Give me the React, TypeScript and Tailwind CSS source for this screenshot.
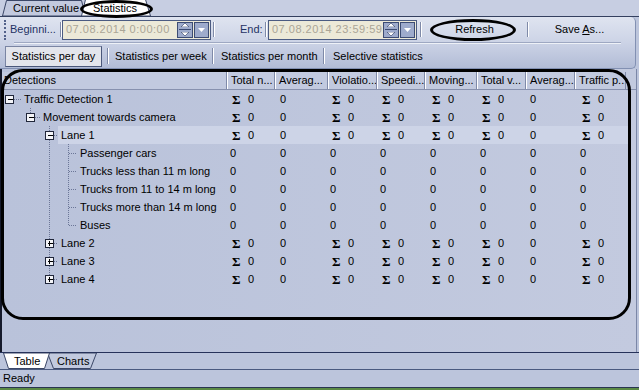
import React from 'react'

type Row = {
  label: string
  level: 0 | 1 | 2 | 3
  box?: 'minus' | 'plus'
  lines: { x: number; full: boolean }[]
  sum: boolean
  hl?: boolean
}

const svgW = [19, 38, 56, 75]
const centers = [7, 28, 47, 66]
const labelW = ['w-[207px]', 'w-[188px]', 'w-[170px]', 'w-[151px]']
const sigmaCols = [true, false, true, true, true, true, false, true]

const leaf = (label: string, last = false): Row => ({
  label,
  level: 3,
  lines: [
    { x: 47, full: true },
    { x: 66, full: !last },
  ],
  sum: false,
})

const rows: Row[] = [
  { label: 'Traffic Detection 1', level: 0, box: 'minus', lines: [], sum: true },
  { label: 'Movement towards camera', level: 1, box: 'minus', lines: [{ x: 28, full: false }], sum: true },
  { label: 'Lane 1', level: 2, box: 'minus', lines: [{ x: 47, full: true }], sum: true, hl: true },
  leaf('Passenger cars'),
  leaf('Trucks less than 11 m long'),
  leaf('Trucks from 11 to 14 m long'),
  leaf('Trucks more than 14 m long'),
  leaf('Buses', true),
  { label: 'Lane 2', level: 2, box: 'plus', lines: [{ x: 47, full: true }], sum: true },
  { label: 'Lane 3', level: 2, box: 'plus', lines: [{ x: 47, full: true }], sum: true },
  { label: 'Lane 4', level: 2, box: 'plus', lines: [{ x: 47, full: false }], sum: true },
]

const headers = [
  { t: 'Total n...', w: 'w-[48px]' },
  { t: 'Averag...', w: 'w-[53px]' },
  { t: 'Violatio...', w: 'w-[49px]' },
  { t: 'Speedi...', w: 'w-[48px]' },
  { t: 'Moving...', w: 'w-[52px]' },
  { t: 'Total v...', w: 'w-[49px]' },
  { t: 'Averag...', w: 'w-[49px]' },
  { t: 'Traffic p...', w: 'w-[51px]' },
]

function TreeGlyph({ row }: { row: Row }) {
  const w = svgW[row.level]
  const c = centers[row.level]
  const dot = { stroke: '#6b7697', strokeDasharray: '1 1' }
  return (
    <svg width={w} height={18} className="shrink-0">
      {row.lines.map((l, i) => (
        <line key={i} x1={l.x + 0.5} x2={l.x + 0.5} y1={0} y2={l.full ? 18 : 9} {...dot} />
      ))}
      {row.box ? (
        <>
          <line x1={c + 5} x2={w} y1={9.5} y2={9.5} {...dot} />
          <rect x={c - 3.5} y={5.5} width={8} height={8} fill="#f3f4f8" stroke="#20263a" />
          <line x1={c - 1} x2={c + 4} y1={9.5} y2={9.5} stroke="#000" />
          {row.box === 'plus' && <line x1={c + 0.5} x2={c + 0.5} y1={7} y2={12} stroke="#000" />}
        </>
      ) : (
        <line x1={c + 1} x2={w} y1={9.5} y2={9.5} {...dot} />
      )}
    </svg>
  )
}

function Cell({ sum }: { sum: boolean }) {
  if (sum) {
    return (
      <div className="w-[50px] flex items-center">
        <span className="w-[20px] pl-[4px] font-bold text-[13px] font-['Liberation_Serif',serif] leading-none">Σ</span>
        <span>0</span>
      </div>
    )
  }
  return <div className="w-[50px] pl-[2px]">0</div>
}

function Sep({ h = 'h-[15px]' }: { h?: string }) {
  return <div className={`w-[2px] ${h} border-l border-[#7f8aa8] border-r border-r-white shrink-0`} />
}

function DateBox({ value }: { value: string }) {
  return (
    <div className="w-[149px] h-[20px] border border-[#4b5b82] bg-[#ece9d8] flex items-center shrink-0">
      <span className="flex-1 pl-[3px] text-[#aaa596] tracking-[0.5px]">{value}</span>
      <div className="w-[16px] h-[16px] border border-[#3d4c73] bg-[#9eabcc] flex flex-col items-center justify-center gap-[2px]">
        <svg width="8" height="4"><polygon points="0,4 4,0 8,4" fill="#fff" stroke="#2c3a60" strokeWidth="0.6" /></svg>
        <div className="w-[12px] h-px bg-[#3d4c73]" />
        <svg width="8" height="4"><polygon points="0,0 8,0 4,4" fill="#fff" stroke="#2c3a60" strokeWidth="0.6" /></svg>
      </div>
      <div className="ml-[1px] mr-[1px] w-[15px] h-[16px] border border-[#3d4c73] bg-[#9eabcc] flex items-center justify-center">
        <svg width="7" height="4"><polygon points="0,0 7,0 3.5,4" fill="#fff" /></svg>
      </div>
    </div>
  )
}

export default function App() {
  return (
    <div className="w-[639px] h-[390px] relative overflow-hidden bg-[#bcc5dc] text-[11px] text-black font-['Liberation_Sans',Arial,sans-serif] flex flex-col leading-none">
      {/* top tabs */}
      <div className="h-[17px] shrink-0 flex items-end bg-[#c7cee2] border-b border-[#34405f]">
        <div className="relative ml-[2px] w-[84px] h-[16px] flex items-center">
          <svg className="absolute inset-0" width="84" height="16">
            <polygon points="0.5,16 4.5,0.5 79.5,0.5 83.5,16" fill="#c2c9de" stroke="#3b4767" />
          </svg>
          <span className="relative pl-[11px]">Current value</span>
        </div>
        <div className="relative -ml-[5px] w-[70px] h-[17px] flex items-center z-10">
          <svg className="absolute inset-0" width="70" height="17">
            <polygon points="0.5,17 4.5,0.5 64.5,0.5 69.5,17" fill="#fff" stroke="#3b4767" />
          </svg>
          <span className="relative pl-[12px] pt-[1px]">Statistics</span>
        </div>
      </div>

      {/* toolbar */}
      <div className="h-[52px] shrink-0 mr-[3px] rounded-r-[5px] bg-gradient-to-b from-[#dfe4f0] via-[#ccd3e6] to-[#b2bcd6] border-b border-r border-[#8290b2] flex flex-col">
        <div className="h-[25px] flex items-center">
          <div className="ml-[4px] w-[2px] h-[20px] border-l-2 border-dotted border-[#52618a]" />
          <span className="ml-[4px] w-[50px] text-[#1f3264]">Beginni...</span>
          <Sep />
          <DateBox value="07.08.2014 0:00:00" />
          <div className="ml-[2px]"><Sep /></div>
          <span className="ml-[25px] w-[25px] text-[#1f3264]">End:</span>
          <Sep />
          <div className="ml-[1px]"><DateBox value="07.08.2014 23:59:59" /></div>
          <div className="ml-[3px]"><Sep /></div>
          <span className="w-[105px] text-center">Refresh</span>
          <Sep />
          <span className="w-[101px] text-center">
            Save <span className="underline">A</span>s...
          </span>
        </div>
        <div className="mx-[14px] h-[2px] border-t border-[#9ea8c2] border-b border-b-[#eef1f7]" />
        <div className="flex-1 flex items-center">
          <div className="ml-[5px] w-[97px] h-[21px] flex items-center justify-center bg-[#e3e5ec] border border-[#4a577a] border-t-[#7a85a3] border-l-[#7a85a3]">
            Statistics per day
          </div>
          <div className="ml-[5px]"><Sep h="h-[16px]" /></div>
          <span className="ml-[6px] w-[97px]">Statistics per week</span>
          <Sep h="h-[16px]" />
          <span className="ml-[7px] w-[102px]">Statistics per month</span>
          <Sep h="h-[16px]" />
          <span className="ml-[8px]">Selective statistics</span>
        </div>
      </div>

      {/* grid */}
      <div className="flex-1 border-l-2 border-[#15192a] mr-[2px] border-r border-r-[#7b87a7] pt-[3px] bg-gradient-to-r from-[#b9c2da] to-[#c3cadf]">
        <div className="h-[18px] flex border-b border-[#8791ae] bg-[#c2cadf]">
          <div className="w-[225px] pl-[2px] flex items-center border-r border-[#7f8aa8]">Detections</div>
          {headers.map((h, i) => (
            <div key={i} className={`${h.w} pl-[3px] flex items-center border-l border-white border-r border-r-[#7f8aa8] overflow-hidden whitespace-nowrap`}>
              {h.t}
            </div>
          ))}
        </div>
        {rows.map((r, i) => (
          <div key={i} className="h-[18px] flex items-center">
            <TreeGlyph row={r} />
            <div className={`h-[18px] flex items-center ${r.hl ? 'bg-[#cdd4e7]' : ''}`}>
              <div className={`${labelW[r.level]} pl-[3px] whitespace-nowrap`}>{r.label}</div>
              {sigmaCols.map((s, j) => (
                <Cell key={j} sum={r.sum && s} />
              ))}
            </div>
          </div>
        ))}
      </div>

      {/* bottom tabs */}
      <div className="h-[17px] shrink-0 flex items-start border-t border-[#26325a] bg-[#bcc5dc]">
        <div className="relative ml-[3px] w-[47px] h-[16px] flex items-center z-10">
          <svg className="absolute inset-0" width="47" height="16">
            <polygon points="0.5,0 5.5,15.5 41.5,15.5 46.5,0" fill="#fff" stroke="#3b4767" />
          </svg>
          <span className="relative pl-[11px]">Table</span>
        </div>
        <div className="relative -ml-[3px] w-[50px] h-[16px] flex items-center">
          <svg className="absolute inset-0" width="50" height="16">
            <polygon points="0.5,0 6.5,15.5 43.5,15.5 49.5,0" fill="#c2cadf" stroke="#3b4767" />
          </svg>
          <span className="relative pl-[10px]">Charts</span>
        </div>
      </div>

      {/* status bar */}
      <div className="h-[19px] shrink-0 border-t border-[#4a5a80] flex items-center pl-[3px] bg-[#bcc5dc] border-b border-b-[#2a3552]">
        Ready
      </div>
      <div className="h-[2px] shrink-0 bg-[#5b8a45]" />

      {/* annotations */}
      <div className="absolute left-[80px] top-0 w-[73px] h-[18px] border-[3px] border-black rounded-[50%] z-20" />
      <div className="absolute left-[430px] top-[19px] w-[86px] h-[22px] border-[3px] border-black rounded-[50%] z-20" />
      <div className="absolute left-[1px] top-[69px] w-[630px] h-[251px] border-[3px] border-black rounded-[22px] z-20" />
    </div>
  )
}
